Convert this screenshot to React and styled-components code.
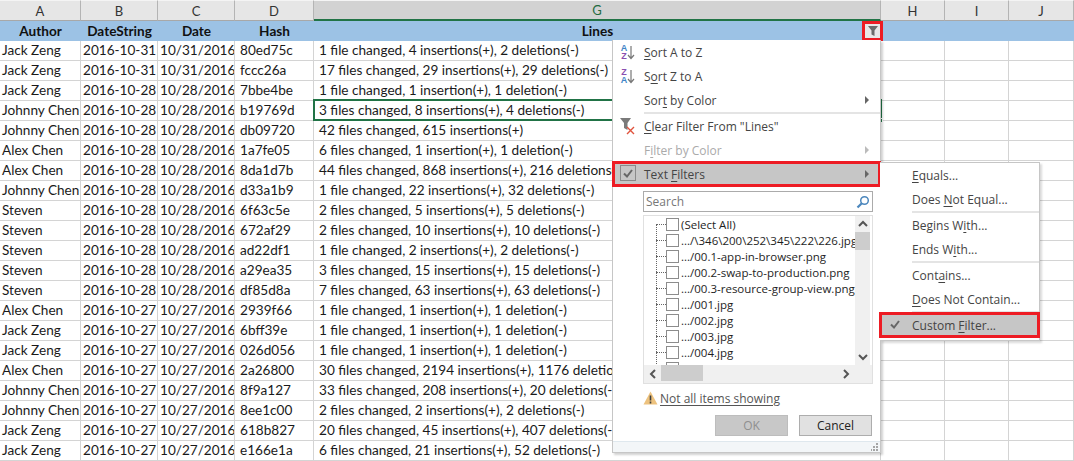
import { createGlobalStyle } from "styled-components";
import styled from "styled-components";

const GlobalStyle = createGlobalStyle`
  html, body {
    margin: 0;
    padding: 0;
    background: #fff;
  }
`;

const COLUMNS = "81px 77px 77px 79px 567px 64px 64px 65px";

const rows = [
  ["Jack Zeng", "2016-10-31", "10/31/2016", "80ed75c", "1 file changed, 4 insertions(+), 2 deletions(-)"],
  ["Jack Zeng", "2016-10-31", "10/31/2016", "fccc26a", "17 files changed, 29 insertions(+), 29 deletions(-)"],
  ["Jack Zeng", "2016-10-28", "10/28/2016", "7bbe4be", "1 file changed, 1 insertion(+), 1 deletion(-)"],
  ["Johnny Chen", "2016-10-28", "10/28/2016", "b19769d", "3 files changed, 8 insertions(+), 4 deletions(-)"],
  ["Johnny Chen", "2016-10-28", "10/28/2016", "db09720", "42 files changed, 615 insertions(+)"],
  ["Alex Chen", "2016-10-28", "10/28/2016", "1a7fe05", "6 files changed, 1 insertion(+), 1 deletion(-)"],
  ["Alex Chen", "2016-10-28", "10/28/2016", "8da1d7b", "44 files changed, 868 insertions(+), 216 deletions(-)"],
  ["Johnny Chen", "2016-10-28", "10/28/2016", "d33a1b9", "1 file changed, 22 insertions(+), 32 deletions(-)"],
  ["Steven", "2016-10-28", "10/28/2016", "6f63c5e", "2 files changed, 5 insertions(+), 5 deletions(-)"],
  ["Steven", "2016-10-28", "10/28/2016", "672af29", "2 files changed, 10 insertions(+), 10 deletions(-)"],
  ["Steven", "2016-10-28", "10/28/2016", "ad22df1", "1 file changed, 2 insertions(+), 2 deletions(-)"],
  ["Steven", "2016-10-28", "10/28/2016", "a29ea35", "3 files changed, 15 insertions(+), 15 deletions(-)"],
  ["Steven", "2016-10-28", "10/28/2016", "df85d8a", "7 files changed, 63 insertions(+), 63 deletions(-)"],
  ["Alex Chen", "2016-10-27", "10/27/2016", "2939f66", "1 file changed, 1 insertion(+), 1 deletion(-)"],
  ["Jack Zeng", "2016-10-27", "10/27/2016", "6bff39e", "1 file changed, 1 insertion(+), 1 deletion(-)"],
  ["Jack Zeng", "2016-10-27", "10/27/2016", "026d056", "1 file changed, 1 insertion(+), 1 deletion(-)"],
  ["Alex Chen", "2016-10-27", "10/27/2016", "2a26800", "30 files changed, 2194 insertions(+), 1176 deletions(-)"],
  ["Johnny Chen", "2016-10-27", "10/27/2016", "8f9a127", "33 files changed, 208 insertions(+), 20 deletions(-)"],
  ["Johnny Chen", "2016-10-27", "10/27/2016", "8ee1c00", "2 files changed, 2 insertions(+), 2 deletions(-)"],
  ["Jack Zeng", "2016-10-27", "10/27/2016", "618b827", "20 files changed, 45 insertions(+), 407 deletions(-)"],
  ["Jack Zeng", "2016-10-27", "10/27/2016", "e166e1a", "6 files changed, 21 insertions(+), 52 deletions(-)"],
];

const fileItems = [
  ".../\\346\\200\\252\\345\\222\\226.jpg\"",
  ".../00.1-app-in-browser.png",
  ".../00.2-swap-to-production.png",
  ".../00.3-resource-group-view.png",
  ".../001.jpg",
  ".../002.jpg",
  ".../003.jpg",
  ".../004.jpg",
  ".../005.jpg",
];

const Sheet = styled.div`
  position: relative;
  width: 1074px;
  height: 461px;
  overflow: hidden;
  background: #fff;
  font-family: "Lato", "Liberation Sans", sans-serif;
  font-size: 13.6px;
  color: #1a1a1a;
`;

const GridRow = styled.div`
  display: grid;
  grid-template-columns: ${COLUMNS};
  height: ${(p) => p.$height || 20}px;
`;

const ColumnHead = styled.div`
  display: flex;
  align-items: center;
  justify-content: center;
  box-sizing: border-box;
  border-top: 1px solid #f4f4f4;
  border-right: 1px solid #b4b4b4;
  border-bottom: ${(p) => (p.$active ? "2px solid #217346" : "1px solid #a8a8a8")};
  background: ${(p) => (p.$active ? "#d2d2d2" : "#e6e6e6")};
  font-size: 13px;
  color: ${(p) => (p.$active ? "#1f6b41" : "#333")};
`;

const TitleCell = styled.div`
  display: flex;
  align-items: center;
  justify-content: center;
  background: #9cc2e5;
  font-weight: 700;
  font-size: 13.6px;
  color: #111;
`;

const Cell = styled.div`
  box-sizing: border-box;
  padding: 0 ${(p) => (p.$right ? 2 : 0)}px 0 ${(p) => p.$indent ?? 2}px;
  border-right: 1px solid #d4d4d4;
  border-bottom: 1px solid #d4d4d4;
  line-height: 19px;
  white-space: nowrap;
  overflow: hidden;
  text-align: ${(p) => (p.$right ? "right" : "left")};
`;

const Selection = styled.div`
  position: absolute;
  left: 313px;
  top: 99px;
  width: 569px;
  height: 22px;
  box-sizing: border-box;
  border: 2px solid #217346;
`;

const FillHandle = styled.div`
  position: absolute;
  left: 879px;
  top: 118px;
  width: 4px;
  height: 5px;
  background: #217346;
  border: 1px solid #fff;
  box-sizing: border-box;
`;

const FilterButton = styled.div`
  position: absolute;
  left: 862px;
  top: 21px;
  width: 21px;
  height: 20px;
  box-sizing: border-box;
  border: 3px solid #ed1c24;
  background: #e8e8e8;
  display: flex;
  align-items: center;
  justify-content: center;
`;

const Menu = styled.div`
  position: absolute;
  left: 612px;
  top: 40px;
  width: 269px;
  height: 413px;
  box-sizing: border-box;
  background: #fff;
  border: 1px solid #c6c6c6;
  border-top: none;
  box-shadow: 2px 2px 2px rgba(0, 0, 0, 0.18);
  display: flex;
  flex-direction: column;
  font-family: "Open Sans", "Liberation Sans", sans-serif;
  font-size: 12px;
  color: #444;
`;

const Item = styled.div`
  position: relative;
  display: flex;
  align-items: center;
  flex: none;
  height: 24px;
  box-sizing: border-box;
  padding-left: ${(p) => p.$indent || 31}px;
  color: ${(p) => (p.$disabled ? "#aaa" : "#444")};
  background: ${(p) => (p.$hot ? "#c6c6c6" : "transparent")};
  ${(p) => p.$hot && `
    outline: 3px solid #ed1c24;
    outline-offset: -2px;
  `}
`;

const Mnemonic = styled.span`
  text-decoration: underline;
  text-underline-offset: 2px;
`;

const ItemIcon = styled.span`
  position: absolute;
  left: 4px;
  top: 2px;
  width: 22px;
  height: 20px;
  display: flex;
  align-items: center;
  justify-content: center;
`;

const CheckMark = styled(ItemIcon)`
  left: 7px;
  top: 3px;
  width: 16px;
  height: 16px;
  box-sizing: border-box;
  border: ${(p) => (p.$boxed ? "1px solid #8a8a8a" : "none")};
`;

const Arrow = styled.span`
  position: absolute;
  right: 11px;
  top: 8px;
  width: 0;
  height: 0;
  border-left: 4px solid ${(p) => (p.$disabled ? "#bbb" : "#666")};
  border-top: 4px solid transparent;
  border-bottom: 4px solid transparent;
`;

const Rule = styled.div`
  flex: none;
  height: 2px;
  margin-left: ${(p) => p.$indent || 31}px;
  background: #e4e4e4;
`;

const SortLetters = styled.span`
  display: flex;
  flex-direction: column;
  align-items: center;
  font-family: "Liberation Sans", sans-serif;
  font-size: 9px;
  font-weight: 700;
  line-height: 8px;
`;

const SortLetter = styled.span`
  color: ${(p) => p.$color};
`;

const FilterPane = styled.div`
  display: flex;
  flex-direction: column;
  flex: 1;
  padding: 5px 7px 0 30px;
  min-height: 0;
`;

const SearchBox = styled.div`
  display: flex;
  align-items: center;
  justify-content: space-between;
  height: 21px;
  box-sizing: border-box;
  border: 1px solid #ababab;
  padding: 0 2px 0 2px;
  color: #777;
  font-size: 12px;
`;

const ListBox = styled.div`
  position: relative;
  margin-top: 3px;
  height: 169px;
  box-sizing: border-box;
  border: 1px solid #e0e0e0;
  overflow: hidden;
`;

const TreeRow = styled.div`
  display: flex;
  align-items: center;
  height: 16px;
  color: #1e1e1e;
  font-size: 11.5px;
  white-space: nowrap;
  margin-left: 12px;
  &::before {
    content: "";
    width: 10px;
    margin-right: 0;
    border-top: 1px dotted #666;
    flex: none;
  }
`;

const TreeList = styled.div`
  padding-top: 0;
  border-left: 0;
  position: relative;
  width: 211px;
  overflow: hidden;
  &::before {
    content: "";
    position: absolute;
    left: 12px;
    top: 8px;
    bottom: 0;
    border-left: 1px dotted #666;
  }
`;

const CheckBox = styled.span`
  width: 11px;
  height: 11px;
  flex: none;
  border: 1px solid #8c8c8c;
  background: #fff;
  margin-right: 2px;
`;

const VerticalBar = styled.div`
  position: absolute;
  top: 0;
  right: 2px;
  bottom: 18px;
  width: 15px;
  background: #f0f0f0;
`;

const VerticalThumb = styled.div`
  position: absolute;
  top: 16px;
  left: 0;
  right: 0;
  height: 18px;
  background: #cdcdcd;
`;

const HorizontalBar = styled.div`
  position: absolute;
  left: 0;
  right: 0;
  bottom: 0;
  height: 18px;
  background: #f0f0f0;
`;

const HorizontalThumb = styled.div`
  position: absolute;
  left: 17px;
  top: 0;
  bottom: 2px;
  width: 42px;
  background: #cdcdcd;
`;

const BarChevron = styled.svg`
  position: absolute;
  ${(p) => p.$place};
`;

const Notice = styled.div`
  display: flex;
  align-items: center;
  gap: 2px;
  height: 16px;
  margin-top: 6px;
  font-size: 12px;
  color: #555;
  text-decoration: underline;
  text-underline-offset: 2px;
`;

const ButtonRow = styled.div`
  display: flex;
  justify-content: flex-end;
  gap: 11px;
  margin-top: 9px;
  padding-right: 1px;
`;

const MenuButton = styled.div`
  width: 73px;
  height: 21px;
  box-sizing: border-box;
  display: flex;
  align-items: center;
  justify-content: center;
  font-size: 12px;
  background: ${(p) => (p.$disabled ? "#c8c8c8" : "#e1e1e1")};
  border: 1px solid ${(p) => (p.$disabled ? "#bdbdbd" : "#adadad")};
  color: ${(p) => (p.$disabled ? "#8f8f8f" : "#222")};
`;

const Footer = styled.div`
  position: relative;
  flex: none;
  height: 10px;
  background: #f3f6f8;
  border-top: 1px solid #dfe8ee;
`;

const Grip = styled.svg`
  position: absolute;
  right: 1px;
  bottom: 1px;
`;

const SubMenu = styled.div`
  position: absolute;
  left: 880px;
  top: 162px;
  width: 160px;
  height: 179px;
  box-sizing: border-box;
  background: #fff;
  border: 1px solid #c6c6c6;
  border-left: none;
  box-shadow: 2px 2px 2px rgba(0, 0, 0, 0.15);
  display: flex;
  flex-direction: column;
  font-family: "Open Sans", "Liberation Sans", sans-serif;
  font-size: 12px;
  color: #444;
`;

const Funnel = ({ size = 12 }) => (
  <svg width={size} height={size} viewBox="0 0 12 12">
    <path d="M1 1h10L7.5 5.5V11L4.5 9.5v-4z" fill="#6b6b6b" />
  </svg>
);

const DownArrow = () => (
  <svg width="8" height="15" viewBox="0 0 8 15">
    <path d="M4 1v12M1 10l3 3.5L7 10" fill="none" stroke="#777" strokeWidth="1.2" />
  </svg>
);

const SortIcon = ({ top, bottom, topColor, bottomColor }) => (
  <ItemIcon>
    <SortLetters>
      <SortLetter $color={topColor}>{top}</SortLetter>
      <SortLetter $color={bottomColor}>{bottom}</SortLetter>
    </SortLetters>
    <DownArrow />
  </ItemIcon>
);

const Check = () => (
  <svg width="12" height="12" viewBox="0 0 12 12">
    <path d="M2 6.5l3 3L10 3" fill="none" stroke="#666" strokeWidth="2" />
  </svg>
);

const Magnifier = () => (
  <svg width="14" height="14" viewBox="0 0 14 14">
    <circle cx="8.5" cy="5.5" r="3.8" fill="none" stroke="#4c87bd" strokeWidth="1.5" />
    <path d="M5.8 8.2L1.5 12.5" stroke="#4c87bd" strokeWidth="2.2" />
  </svg>
);

const Chevron = ({ d, place }) => (
  <BarChevron $place={place} width="10" height="8" viewBox="0 0 10 8">
    <path d={d} fill="none" stroke="#555" strokeWidth="2" />
  </BarChevron>
);

const App = () => (
  <Sheet>
    <GlobalStyle />
    <GridRow $height={21}>
      {["A", "B", "C", "D", "G", "H", "I", "J"].map((letter) => (
        <ColumnHead key={letter} $active={letter === "G"}>
          {letter}
        </ColumnHead>
      ))}
    </GridRow>
    <GridRow>
      {["Author", "DateString", "Date", "Hash", "Lines", "", "", ""].map((title, i) => (
        <TitleCell key={i}>{title}</TitleCell>
      ))}
    </GridRow>
    {rows.map((row) => (
      <GridRow key={row[3]}>
        <Cell>{row[0]}</Cell>
        <Cell>{row[1]}</Cell>
        <Cell $right>{row[2]}</Cell>
        <Cell $indent={5}>{row[3]}</Cell>
        <Cell $indent={5}>{row[4]}</Cell>
        <Cell />
        <Cell />
        <Cell />
      </GridRow>
    ))}

    <Selection />
    <FillHandle />
    <FilterButton>
      <Funnel size={12} />
    </FilterButton>

    <Menu>
      <Item>
        <SortIcon top="A" bottom="Z" topColor="#3f86c6" bottomColor="#8a4fb0" />
        <span>
          <Mnemonic>S</Mnemonic>ort A to Z
        </span>
      </Item>
      <Item>
        <SortIcon top="Z" bottom="A" topColor="#8a4fb0" bottomColor="#3f86c6" />
        <span>
          S<Mnemonic>o</Mnemonic>rt Z to A
        </span>
      </Item>
      <Item>
        <span>
          Sor<Mnemonic>t</Mnemonic> by Color
        </span>
        <Arrow />
      </Item>
      <Rule />
      <Item>
        <ItemIcon>
          <svg width="20" height="18" viewBox="0 0 20 18">
            <path d="M2 1h11L9.5 6v7L6 11V6z" fill="#7a7a7a" />
            <path d="M9 10l7 7M16 10l-7 7" stroke="#e0533d" strokeWidth="1.4" />
          </svg>
        </ItemIcon>
        <span>
          <Mnemonic>C</Mnemonic>lear Filter From "Lines"
        </span>
      </Item>
      <Item $disabled>
        <span>
          F<Mnemonic>i</Mnemonic>lter by Color
        </span>
        <Arrow $disabled />
      </Item>
      <Item $hot>
        <CheckMark $boxed>
          <Check />
        </CheckMark>
        <span>
          Text <Mnemonic>F</Mnemonic>ilters
        </span>
        <Arrow />
      </Item>
      <FilterPane>
        <SearchBox>
          Search
          <Magnifier />
        </SearchBox>
        <ListBox>
          <TreeList>
            <TreeRow>
              <CheckBox />
              (Select All)
            </TreeRow>
            {fileItems.map((name) => (
              <TreeRow key={name}>
                <CheckBox />
                {name}
              </TreeRow>
            ))}
          </TreeList>
          <VerticalBar>
            <VerticalThumb />
            <Chevron d="M1 6l4-4 4 4" place="top: 4px; left: 3px;" />
            <Chevron d="M1 2l4 4 4-4" place="bottom: 4px; left: 3px;" />
          </VerticalBar>
          <HorizontalBar>
            <HorizontalThumb />
            <BarChevron $place="left: 5px; top: 4px;" width="8" height="10" viewBox="0 0 8 10">
              <path d="M6 1L2 5l4 4" fill="none" stroke="#555" strokeWidth="2" />
            </BarChevron>
            <BarChevron $place="right: 22px; top: 4px;" width="8" height="10" viewBox="0 0 8 10">
              <path d="M2 1l4 4-4 4" fill="none" stroke="#555" strokeWidth="2" />
            </BarChevron>
          </HorizontalBar>
        </ListBox>
        <Notice>
          <svg width="15" height="14" viewBox="0 0 15 14">
            <path d="M7.5 0.5L14.5 13.5H0.5z" fill="#edc27e" />
            <path d="M7.5 4.5v5M7.5 10.5v2" stroke="#3c3c3c" strokeWidth="1.6" />
          </svg>
          Not all items showing
        </Notice>
        <ButtonRow>
          <MenuButton $disabled>OK</MenuButton>
          <MenuButton>Cancel</MenuButton>
        </ButtonRow>
      </FilterPane>
      <Footer>
        <Grip width="8" height="8" viewBox="0 0 8 8">
          <path d="M5 0h2v2H5zM2 3h2v2H2zM5 3h2v2H5zM0 6h1v2H0zM2 6h2v2H2zM5 6h2v2H5z" fill="#a5a5a5" />
        </Grip>
      </Footer>
    </Menu>

    <SubMenu>
      <Item $indent={32}>
        <span>
          <Mnemonic>E</Mnemonic>quals...
        </span>
      </Item>
      <Item $indent={32}>
        <span>
          Does <Mnemonic>N</Mnemonic>ot Equal...
        </span>
      </Item>
      <Rule $indent={32} />
      <Item $indent={32}>
        <span>
          Begins W<Mnemonic>i</Mnemonic>th...
        </span>
      </Item>
      <Item $indent={32}>
        <span>
          Ends W<Mnemonic>i</Mnemonic>th...
        </span>
      </Item>
      <Rule $indent={32} />
      <Item $indent={32}>
        <span>
          Cont<Mnemonic>a</Mnemonic>ins...
        </span>
      </Item>
      <Item $indent={32}>
        <span>
          <Mnemonic>D</Mnemonic>oes Not Contain...
        </span>
      </Item>
      <Rule $indent={32} />
      <Item $indent={32} $hot>
        <CheckMark>
          <Check />
        </CheckMark>
        <span>
          Custom <Mnemonic>F</Mnemonic>ilter...
        </span>
      </Item>
    </SubMenu>
  </Sheet>
);

export default App;
